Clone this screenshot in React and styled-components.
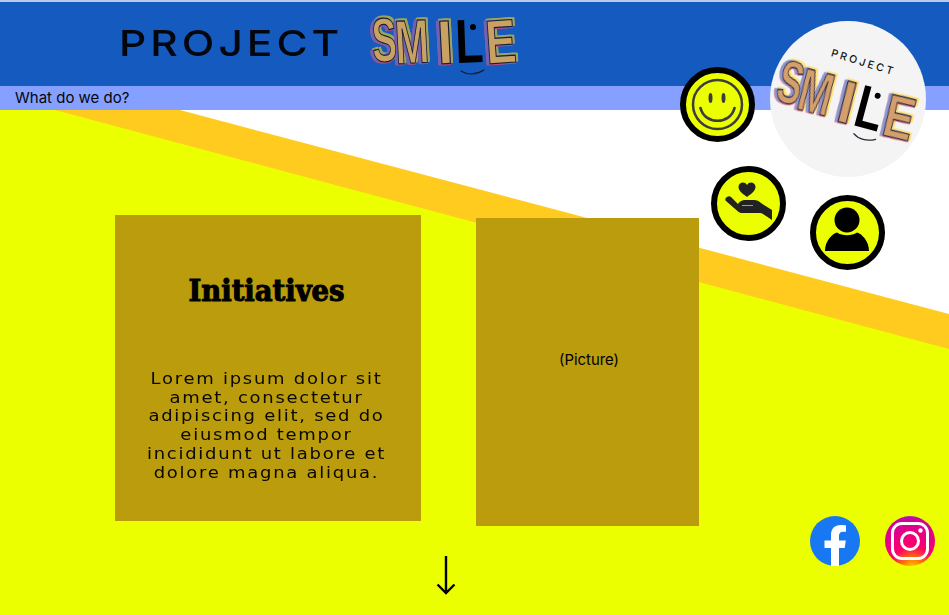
import React from "react";
import styled, { createGlobalStyle } from "styled-components";

const Global = createGlobalStyle`
  html, body { margin: 0; padding: 0; background: #fff; }
  #root { width: 949px; height: 615px; overflow: hidden; }
`;

const Page = styled.div`
  position: relative;
  width: 949px;
  height: 615px;
  overflow: hidden;
  display: flex;
  flex-direction: column;
  border-top: 2px solid #b7cbe8;
  box-sizing: border-box;
  font-family: Inter, "Liberation Sans", sans-serif;
  color: #000;
`;

const Header = styled.header`
  height: 84px;
  flex: none;
  background: #155abe;
  display: flex;
  align-items: flex-start;
  padding-left: 119px;
`;

const Brand = styled.h1`
  margin: 19px 0 0;
  width: 190px;
  font: 500 36px/44px Inter, "Liberation Sans", sans-serif;
  letter-spacing: 3.4px;
  color: #03060c;
  transform: scaleX(1.18);
  transform-origin: left center;
`;

const HeaderLogo = styled.div`
  margin: 12px 0 0 63px;
  width: 150px;
  height: 70px;
`;

const Nav = styled.nav`
  height: 24px;
  flex: none;
  background: #85a0ff;
  padding-left: 15px;
  font-size: 15px;
  line-height: 24px;
  color: #04060f;
`;

const Main = styled.main`
  position: relative;
  flex: 1;
  background: #fff;
  display: grid;
  grid-template-columns: 115px 306px 55px 223px 1fr;
  grid-template-rows: 105px 311px 1fr;
`;

const Band = styled.div`
  position: absolute;
  inset: 0;
  background: ${(p) => p.$color};
  clip-path: polygon(${(p) => p.$shape});
`;

const Card = styled.section`
  position: relative;
  grid-column: 2;
  grid-row: 2;
  height: 306px;
  background: #ba9c0d;
  display: flex;
  flex-direction: column;
  align-items: center;
  text-align: center;
  box-sizing: border-box;
  padding-top: 55px;
`;

const CardTitle = styled.h2`
  margin: 0 3px 0 0;
  font: 700 30.5px/40px "DejaVu Serif Condensed", "DejaVu Serif", serif;
  -webkit-text-stroke: 1px #000;
  color: #000;
`;

const CardText = styled.p`
  margin: 60px 3px 0 0;
  width: 225px;
  font: 400 15.5px/18.7px "DejaVu Sans", sans-serif;
  letter-spacing: 1.5px;
  color: #0a0800;
  transform: scaleX(1.16);
`;

const Picture = styled.section`
  position: relative;
  grid-column: 4;
  grid-row: 2;
  margin-top: 3px;
  height: 308px;
  background: #ba9c0d;
  display: flex;
  justify-content: center;
  padding: 134px 0 0 3px;
  box-sizing: border-box;
  font-size: 14.9px;
  line-height: 17px;
`;

const ArrowSlot = styled.div`
  position: relative;
  grid-column: 1 / 5;
  grid-row: 3;
  margin: 30px 0 0 434px;
  width: 24px;
  height: 40px;
`;

const Socials = styled.div`
  position: relative;
  grid-column: 5;
  grid-row: 2 / 4;
  align-self: end;
  justify-self: end;
  display: flex;
  gap: 25px;
  margin: 0 14px 49px 0;
`;

const Social = styled.svg`
  width: 50px;
  height: 50px;
  display: block;
`;

const LogoDisc = styled.div`
  position: absolute;
  left: 770px;
  top: 19px;
  width: 156px;
  height: 156px;
  border-radius: 50%;
  background: #f4f4f5;
`;

const DiscCaption = styled.div`
  position: absolute;
  left: 60px;
  top: 35px;
  font: 500 10.5px/13px Inter, "Liberation Sans", sans-serif;
  letter-spacing: 2.6px;
  color: #111;
  transform: rotate(17deg);
`;

const DiscLogo = styled.div`
  position: absolute;
  left: 2px;
  top: 53px;
  width: 150px;
  height: 70px;
  transform: rotate(17deg) scale(0.98);
`;

const Badge = styled.div`
  position: absolute;
  left: ${(p) => p.$x}px;
  top: ${(p) => p.$y}px;
  width: 75px;
  height: 75px;
  box-sizing: border-box;
  border-radius: 50%;
  border: 6px solid #000;
  background: #ebff00;
  svg { display: block; width: 63px; height: 63px; }
`;

const LogoSvg = styled.svg`
  display: block;
  width: 100%;
  height: 100%;
  overflow: visible;
`;

const Letters = styled.g`
  font-family: "Liberation Sans", sans-serif;
  font-weight: 700;
  font-size: 62px;
  fill: ${(p) => p.$fill};
  stroke: ${(p) => p.$line};
  stroke-width: 1.2px;
  filter: drop-shadow(-2.5px 0.5px 0 ${(p) => p.$back})
    drop-shadow(0.5px 1.5px 0 ${(p) => p.$under})
    drop-shadow(2px -1.5px 0 ${(p) => p.$front});
`;

const BlackLetter = styled.text`
  font-family: "Liberation Sans", sans-serif;
  font-weight: 700;
  font-size: 62px;
  fill: #000;
`;

const LETTERS = [
  { ch: "S", x: 1, y: 48, sx: 0.6, rot: -3 },
  { ch: "M", x: 24, y: 50, sx: 0.66, rot: -3 },
  { ch: "I", x: 66, y: 50, sx: 0.95, rot: -3 },
  { ch: "E", x: 115, y: 50, sx: 0.74, rot: -4 },
];

function SmileLogo({ fill, line, back, under, front }) {
  return (
    <LogoSvg viewBox="0 0 150 70" aria-label="Smile">
      <Letters $fill={fill} $line={line} $back={back} $under={under} $front={front}>
        {LETTERS.map((l) => (
          <text key={l.ch} transform={`translate(${l.x} ${l.y}) rotate(${l.rot}) scale(${l.sx} 1)`}>
            {l.ch}
          </text>
        ))}
      </Letters>
      <BlackLetter transform="translate(84 49) rotate(-2) scale(0.74 1)">L</BlackLetter>
      <circle cx="101" cy="13" r="3" fill="#000" />
      <path d="M89 57c6 4 15 4 23-1" fill="none" stroke={line} strokeWidth="1.3" strokeLinecap="round" />
    </LogoSvg>
  );
}

const Arrow = () => (
  <svg width="24" height="40" viewBox="0 0 24 40" fill="none" stroke="#000" strokeWidth="2.400">
    <path d="M12 0v37M3.500 28.500 12 37l8.500-8.500" />
  </svg>
);

export default function App() {
  return (
    <Page>
      <Global />
      <Header>
        <Brand>PROJECT</Brand>
        <HeaderLogo>
          <SmileLogo fill="#c9a162" line="#16202e" back="#6f62b4" under="#b0508a" front="#9aa45e" />
        </HeaderLogo>
      </Header>
      <Nav>What do we do?</Nav>
      <Main>
        <Band $color="#ffcb1f" $shape="0 0, 180px 0, 949px 204px, 949px 100%, 0 100%" />
        <Band $color="#ebff00" $shape="0 0, 55px 0, 949px 239px, 949px 100%, 0 100%" />
        <Card>
          <CardTitle>Initiatives</CardTitle>
          <CardText>
            Lorem ipsum dolor sit amet, consectetur adipiscing elit, sed do eiusmod tempor
            incididunt ut labore et dolore magna aliqua.
          </CardText>
        </Card>
        <Picture>(Picture)</Picture>
        <ArrowSlot>
          <Arrow />
        </ArrowSlot>
        <Socials>
          <Social viewBox="0 0 50 50">
            <circle cx="25" cy="25" r="25" fill="#1877f2" />
            <path
              d="M21 50V32h-6.500v-7.500H21V19c0-6.500 3.800-10 9.700-10 2.800 0 5.300.4 5.300.4v6.300h-3c-3 0-4 1.900-4 3.800v5h6.800l-1.100 7.500H29v18a25 25 0 0 1-8 0Z"
              fill="#fff"
            />
          </Social>
          <Social viewBox="0 0 50 50">
            <defs>
              <radialGradient id="ig" cx="0.55" cy="1.05" r="1.1">
                <stop offset="0" stopColor="#ffd600" />
                <stop offset="0.18" stopColor="#ff7a00" />
                <stop offset="0.4" stopColor="#ff0069" />
                <stop offset="0.9" stopColor="#d1009a" />
                <stop offset="1" stopColor="#6f3bdc" />
              </radialGradient>
            </defs>
            <circle cx="25" cy="25" r="25" fill="url(#ig)" />
            <rect x="7.500" y="7.500" width="35" height="35" rx="9.500" fill="none" stroke="#fff" strokeWidth="3" />
            <circle cx="25" cy="25" r="8.500" fill="none" stroke="#fff" strokeWidth="3" />
            <circle cx="35.500" cy="14.500" r="2.200" fill="#fff" />
          </Social>
        </Socials>
      </Main>

      <LogoDisc>
        <DiscCaption>PROJECT</DiscCaption>
        <DiscLogo>
          <SmileLogo fill="#d59f6c" line="#2a2a3a" back="#8d97d0" under="#ee7f93" front="#ffe27a" />
        </DiscLogo>
      </LogoDisc>

      <Badge $x={680} $y={65}>
        <svg viewBox="0 0 63 63" fill="none" stroke="#3d3d3d" strokeWidth="2.500" strokeLinecap="round">
          <circle cx="31.500" cy="31.500" r="24.500" />
          <path d="M14.500 35c4 17 30 17 34 0" strokeWidth="2.700" />
          <ellipse cx="24.500" cy="25" rx="2" ry="5" fill="#3d3d3d" stroke="none" />
          <ellipse cx="37.500" cy="25" rx="2" ry="5" fill="#3d3d3d" stroke="none" />
        </svg>
      </Badge>
      <Badge $x={711} $y={164}>
        <svg viewBox="0 0 63 63" fill="#222">
          <path d="M30 25c-3-2.500-8.500-5.500-8.500-10 0-5 6.500-6 8.500-2 2-4 8.500-3 8.500 2 0 4.500-5.500 7.500-8.500 10Z" />
          <path d="M10 25c1-1 3-1 4 0l7 7c2-3 4-4 7-4h9c3 0 5 1 7 3l11 7v10l-9-6c-1-.7-2-1-3-1H25c-2 0-3-.7-4-1.500L9 29c-1-1-1-3 1-4Z" />
          <path d="M25 33.500h11" stroke="#a8b400" strokeWidth="1" />
        </svg>
      </Badge>
      <Badge $x={810} $y={193}>
        <svg viewBox="0 0 63 63" fill="#000">
          <circle cx="31" cy="19" r="12.500" />
          <path d="M9 50c0-10 7-17 12-18.500 5 3.500 15 3.500 20 0 5 1.500 12 8.500 12 18.500Z" />
        </svg>
      </Badge>
    </Page>
  );
}
